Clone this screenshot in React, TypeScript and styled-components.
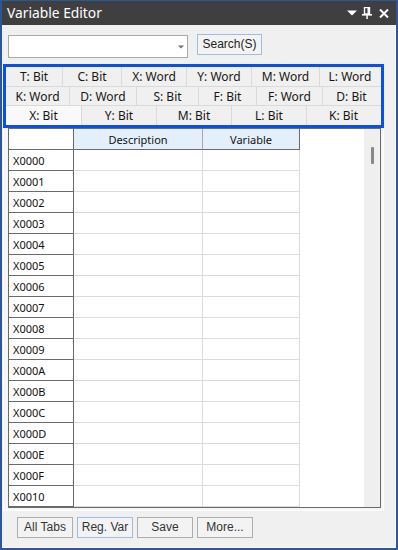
import styled, { createGlobalStyle } from 'styled-components';

const GlobalStyle = createGlobalStyle`
  body {
    margin: 0;
    background: #ffffff;
    font-family: 'Noto Sans', sans-serif;
  }
`;

const Window = styled.div`
  width: 398px;
  height: 550px;
  box-sizing: border-box;
  border: 2px solid #2b579a;
  border-top-width: 1px;
  display: flex;
  flex-direction: column;
  background: #f0f0f0;
`;

const TitleBar = styled.div`
  height: 24px;
  flex: none;
  background: #3f3f3f;
  display: flex;
  align-items: center;
  padding: 0 7px 0 5px;
`;

const Title = styled.div`
  flex: 1;
  color: #ffffff;
  font-family: 'Noto Sans', sans-serif;
  font-size: 13.8px;
  line-height: 24px;
  margin-top: -1px;
`;

const TitleIcon = styled.svg<{ $gap: number }>`
  display: block;
  margin-left: ${p => p.$gap}px;
`;

const Body = styled.div`
  flex: 1;
  display: flex;
  flex-direction: column;
  padding: 0 11px 0 1px;
  border-right: 1px solid #fbfbfb;
  border-bottom: 1px solid #fbfbfb;
`;

const SearchRow = styled.div`
  display: flex;
  align-items: flex-start;
  margin: 10px 0 0 5px;
`;

const Combo = styled.div`
  width: 180px;
  height: 23px;
  box-sizing: border-box;
  border: 1px solid #a9a9a9;
  background: #ffffff;
  display: flex;
  align-items: center;
  justify-content: flex-end;
  padding: 1px 3px 0 0;
`;

const PushButton = styled.button<{ $focused?: boolean; $w: number }>`
  width: ${p => p.$w}px;
  height: 21px;
  box-sizing: border-box;
  padding: 0;
  border: 1px solid ${p => (p.$focused ? '#9cbde8' : '#adadad')};
  background: #f3f3f3;
  color: #333333;
  font-family: 'Liberation Sans', Arial, sans-serif;
  font-size: 12px;
  line-height: 19px;
`;

const SearchButton = styled(PushButton)`
  margin: -1px 0 0 9px;
  color: #222222;
`;

const Panel = styled.div`
  margin-top: 6px;
  display: flex;
  flex-direction: column;
`;

const TabStrip = styled.div`
  border: 3px solid #0b4fe9;
  background: #f0f0f0;
`;

const TabRow = styled.div<{ $h: number; $last?: boolean }>`
  display: flex;
  height: ${p => p.$h}px;
  box-sizing: border-box;
  border-bottom: ${p => (p.$last ? 'none' : '1px solid #dadada')};
`;

const Tab = styled.div<{ $w: number; $active?: boolean }>`
  width: ${p => p.$w}px;
  box-sizing: border-box;
  border-right: 1px solid #dadada;
  background: ${p => (p.$active ? '#f9f9f9' : '#f0f0f0')};
  display: flex;
  align-items: center;
  justify-content: center;
  font-size: 12px;
  color: #161616;
  white-space: nowrap;

  &:last-child {
    border-right: none;
  }
`;

const ContentArea = styled.div`
  background: #f6f6f6;
  border: 1px solid #fdfdfd;
  border-top: none;
  padding: 0 2px 2px 4px;
`;

const Table = styled.div`
  height: 380px;
  box-sizing: border-box;
  border: 1px solid #6a6a6a;
  background: #ffffff;
  display: flex;
`;

const GridArea = styled.div`
  flex: 1;
  overflow: hidden;
  display: flex;
  flex-direction: column;
`;

const GridRow = styled.div`
  display: flex;
  flex: none;
  height: 21px;
`;

const RowHead = styled.div`
  width: 65px;
  box-sizing: border-box;
  border-right: 1px solid #6a6a6a;
  border-bottom: 1px solid #6a6a6a;
  padding: 1px 0 0 4px;
  font-size: 11px;
  line-height: 20px;
  color: #111111;
`;

const ColHead = styled.div<{ $w: number; $edge: string }>`
  width: ${p => p.$w}px;
  box-sizing: border-box;
  background: #e4effc;
  border-right: 1px solid ${p => p.$edge};
  border-bottom: 1px solid #6a6a6a;
  padding-top: 2px;
  text-align: center;
  font-size: 11px;
  line-height: 18px;
  color: #111111;
`;

const Cell = styled.div<{ $w: number }>`
  width: ${p => p.$w}px;
  box-sizing: border-box;
  border-right: 1px solid #dcdcdc;
  border-bottom: 1px solid #dcdcdc;
`;

const Scrollbar = styled.div`
  width: 16px;
  flex: none;
  background: #efefef;
  display: flex;
  justify-content: center;
  padding-top: 18px;
  box-sizing: border-box;
`;

const Thumb = styled.div`
  width: 3px;
  height: 17px;
  margin-left: 1px;
  background: #888888;
  border-radius: 1px;
`;

const Footer = styled.div`
  display: flex;
  gap: 4px;
  margin: 6px 0 0 14px;
`;

const tabRows = [
  {
    h: 20,
    tabs: [
      ['T: Bit', 57],
      ['C: Bit', 59],
      ['X: Word', 65],
      ['Y: Word', 65],
      ['M: Word', 68],
      ['L: Word', 60],
    ],
  },
  {
    h: 19,
    tabs: [
      ['K: Word', 64],
      ['D: Word', 67],
      ['S: Bit', 62],
      ['F: Bit', 58],
      ['F: Word', 66],
      ['D: Bit', 57],
    ],
  },
  {
    h: 19,
    tabs: [
      ['X: Bit', 76],
      ['Y: Bit', 75],
      ['M: Bit', 75],
      ['L: Bit', 75],
      ['K: Bit', 73],
    ],
  },
] as const;

const addresses = Array.from({ length: 17 }, (_, i) =>
  'X' + i.toString(16).toUpperCase().padStart(4, '0')
);

export default function App() {
  return (
    <>
      <GlobalStyle />
      <Window>
        <TitleBar>
          <Title>Variable Editor</Title>
          <TitleIcon $gap={0} width="10" height="6" viewBox="0 0 10 6">
            <polygon points="0,0.5 10,0.5 5,5.5" fill="#ffffff" />
          </TitleIcon>
          <TitleIcon $gap={5} width="10" height="12" viewBox="0 0 10 12">
            <rect x="2.5" y="0.5" width="5" height="6.5" fill="none" stroke="#ffffff" strokeWidth="1.4" />
            <rect x="5.5" y="1" width="1.5" height="6" fill="#ffffff" />
            <rect x="0" y="7" width="10" height="1.6" fill="#ffffff" />
            <rect x="4.3" y="8" width="1.5" height="4" fill="#ffffff" />
          </TitleIcon>
          <TitleIcon $gap={7} width="10" height="9" viewBox="0 0 10 9">
            <path d="M1 0.5 L9 8.5 M9 0.5 L1 8.5" stroke="#ffffff" strokeWidth="2" />
          </TitleIcon>
        </TitleBar>
        <Body>
          <SearchRow>
            <Combo>
              <svg width="6" height="4" viewBox="0 0 6 4">
                <polygon points="0,0.5 6,0.5 3,3.5" fill="#707070" />
              </svg>
            </Combo>
            <SearchButton $w={65} $focused>Search(S)</SearchButton>
          </SearchRow>
          <Panel>
            <TabStrip>
              {tabRows.map((row, r) => (
                <TabRow key={r} $h={row.h} $last={r === tabRows.length - 1}>
                  {row.tabs.map(([label, w], i) => (
                    <Tab key={i} $w={w} $active={r === 2 && i === 0}>
                      {label}
                    </Tab>
                  ))}
                </TabRow>
              ))}
            </TabStrip>
            <ContentArea>
              <Table>
                <GridArea>
                  <GridRow>
                    <RowHead />
                    <ColHead $w={129} $edge="#a8a8a8">Description</ColHead>
                    <ColHead $w={97} $edge="#6a6a6a">Variable</ColHead>
                  </GridRow>
                  {addresses.map(a => (
                    <GridRow key={a}>
                      <RowHead>{a}</RowHead>
                      <Cell $w={129} />
                      <Cell $w={97} />
                    </GridRow>
                  ))}
                </GridArea>
                <Scrollbar>
                  <Thumb />
                </Scrollbar>
              </Table>
            </ContentArea>
          </Panel>
          <Footer>
            <PushButton $w={56}>All Tabs</PushButton>
            <PushButton $w={56} $focused>Reg. Var</PushButton>
            <PushButton $w={56}>Save</PushButton>
            <PushButton $w={56}>More...</PushButton>
          </Footer>
        </Body>
      </Window>
    </>
  );
}
